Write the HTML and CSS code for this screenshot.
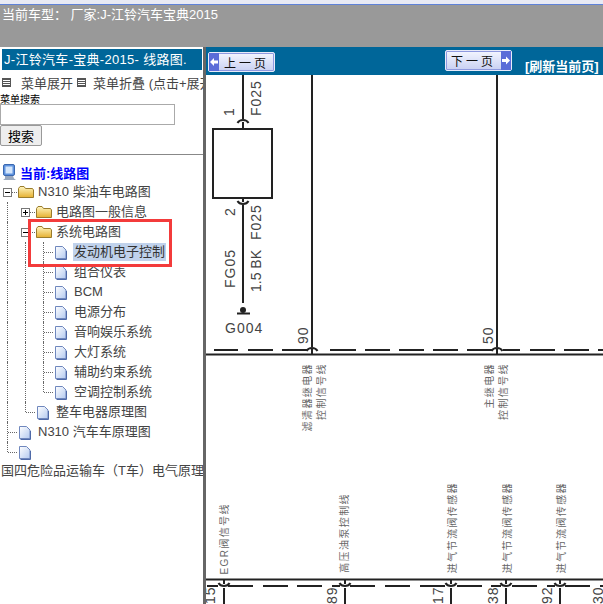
FILE: index.html
```html
<!DOCTYPE html>
<html lang="zh-CN">
<head>
  <meta charset="UTF-8">
  <title>线路图</title>
  <link rel="stylesheet" href="styles.css">
</head>
<body>
  <header class="topbar">当前车型： 厂家:J-江铃汽车宝典2015</header>

  <div class="frames">
    <aside class="sidebar">
      <div class="side-title">J-江铃汽车-宝典-2015- 线路图.</div>
      <div class="menu-links">
        <span class="menu-icon"></span><span class="menu-link">菜单展开</span>
        <span class="menu-icon"></span><span class="menu-link second">菜单折叠 (点击+展开)</span>
      </div>
      <div class="search-label">菜单搜索</div>
      <input class="search-input" type="text">
      <button class="search-btn">搜索</button>
      <hr class="divider">

      <div class="tree">
        <div class="row root">
          <svg class="icon" viewBox="0 0 18 20"><rect x="4.500" y="2.500" width="11" height="11" rx="1.500" fill="#5f93de" stroke="#3a68b0"/><rect x="6.500" y="4.500" width="7" height="7" fill="#d4e6fb"/><path d="M6 14h8l1 2.500 2 1.500H4l2-1.500z" fill="#9aa9bf"/></svg>
          <a class="current">当前:线路图</a>
        </div>
        <div class="row">
          <i class="cell minus"></i>
          <svg class="icon" viewBox="0 0 18 20"><use href="#folder"/></svg>
          <span class="label">N310 柴油车电路图</span>
        </div>
        <div class="row">
          <i class="cell line"></i><i class="cell plus"></i>
          <svg class="icon" viewBox="0 0 18 20"><use href="#folder"/></svg>
          <span class="label">电路图一般信息</span>
        </div>
        <div class="row">
          <i class="cell line"></i><i class="cell minus"></i>
          <svg class="icon" viewBox="0 0 18 20"><use href="#folder"/></svg>
          <span class="label">系统电路图</span>
        </div>
        <div class="row">
          <i class="cell line"></i><i class="cell line"></i><i class="cell join"></i>
          <svg class="icon" viewBox="0 0 18 20"><use href="#page"/></svg>
          <span class="label selected">发动机电子控制</span>
        </div>
        <div class="row">
          <i class="cell line"></i><i class="cell line"></i><i class="cell join"></i>
          <svg class="icon" viewBox="0 0 18 20"><use href="#page"/></svg>
          <span class="label">组合仪表</span>
        </div>
        <div class="row">
          <i class="cell line"></i><i class="cell line"></i><i class="cell join"></i>
          <svg class="icon" viewBox="0 0 18 20"><use href="#page"/></svg>
          <span class="label">BCM</span>
        </div>
        <div class="row">
          <i class="cell line"></i><i class="cell line"></i><i class="cell join"></i>
          <svg class="icon" viewBox="0 0 18 20"><use href="#page"/></svg>
          <span class="label">电源分布</span>
        </div>
        <div class="row">
          <i class="cell line"></i><i class="cell line"></i><i class="cell join"></i>
          <svg class="icon" viewBox="0 0 18 20"><use href="#page"/></svg>
          <span class="label">音响娱乐系统</span>
        </div>
        <div class="row">
          <i class="cell line"></i><i class="cell line"></i><i class="cell join"></i>
          <svg class="icon" viewBox="0 0 18 20"><use href="#page"/></svg>
          <span class="label">大灯系统</span>
        </div>
        <div class="row">
          <i class="cell line"></i><i class="cell line"></i><i class="cell join"></i>
          <svg class="icon" viewBox="0 0 18 20"><use href="#page"/></svg>
          <span class="label">辅助约束系统</span>
        </div>
        <div class="row">
          <i class="cell line"></i><i class="cell line"></i><i class="cell corner"></i>
          <svg class="icon" viewBox="0 0 18 20"><use href="#page"/></svg>
          <span class="label">空调控制系统</span>
        </div>
        <div class="row">
          <i class="cell line"></i><i class="cell corner"></i>
          <svg class="icon" viewBox="0 0 18 20"><use href="#page"/></svg>
          <span class="label">整车电器原理图</span>
        </div>
        <div class="row">
          <i class="cell join"></i>
          <svg class="icon" viewBox="0 0 18 20"><use href="#page"/></svg>
          <span class="label">N310 汽车车原理图</span>
        </div>
        <div class="row">
          <i class="cell corner"></i>
          <svg class="icon" viewBox="0 0 18 20"><use href="#page"/></svg>
        </div>
        <div class="row wrapped"><span class="label">国四危险品运输车（T车）电气原理图</span></div>
      </div>

      <div class="highlight"></div>
    </aside>

    <main class="viewer">
      <div class="pager">
        <a class="page-btn prev">
          <svg class="arrow" viewBox="0 0 10 10"><path d="M1 5l4-4v2.500h4v3H5V9z" fill="#fff"/></svg>
          <span>上一页</span>
        </a>
        <a class="page-btn next">
          <span>下一页</span>
          <svg class="arrow" viewBox="0 0 10 10"><path d="M9 5L5 1v2.500H1v3h4V9z" fill="#fff"/></svg>
        </a>
        <a class="refresh">[刷新当前页]</a>
      </div>

      
      <svg class="diagram" viewBox="206 75 397 529">
        <g class="wire">
          <path d="M243 75V119M243 122V129"/>
          <path d="M237.500 123a6 5 0 0 1 11 0"/>
          <rect x="213" y="129" width="59" height="69"/>
          <path d="M243 198V202M237.500 201a6 5 0 0 0 11 0M243 205V303"/>
          <path d="M237 313.500H250"/>
          <path d="M312 75V347M497 75V347"/>
          <path d="M306.500 351a6 5 0 0 1 11 0M491.500 351a6 5 0 0 1 11 0M312 349V354M497 349V354"/>
          <path d="M206 354.500H603M206 579.500H603"/>
          <path d="M214 350H238M248 350H273M282 350H307M330 350H356M365 350H390M399 350H424M433 350H458M467 350H492M503 350H520M530 350H555M564 350H589M598 350H603"/>
          <path d="M207 586H218M228 586H253M263 586H288M297 586H322M332 586H340M350 586H375M385 586H410M420 586H445M457 586H482M491 586H501M512 586H537M547 586H555M565 586H590M600 586H603"/>
          <path d="M218.500 583a6 5 0 0 0 11 0M339.500 583a6 5 0 0 0 11 0M445.500 583a6 5 0 0 0 11 0M500.500 583a6 5 0 0 0 11 0M554.500 583a6 5 0 0 0 11 0"/>
          <path d="M224 580V584M345 580V584M451 580V584M506 580V584M560 580V584"/>
          <path d="M224 588V604M345 588V604M451 588V604M506 588V604M560 588V604"/>
        </g>
        <circle cx="243" cy="310" r="3" fill="#222"/>

        <text class="part" transform="translate(234 116) rotate(-90)">1</text>
        <text class="part" transform="translate(261 116) rotate(-90)">F025</text>
        <text class="part" transform="translate(235 216) rotate(-90)">2</text>
        <text class="part" transform="translate(261 240) rotate(-90)">F025</text>
        <text class="part tight" transform="translate(261 292) rotate(-90)">1.5 BK</text>
        <text class="part" transform="translate(235 288) rotate(-90)">FG05</text>
        <text class="part" x="225" y="333">G004</text>
        <text class="part" transform="translate(308 344) rotate(-90)">90</text>
        <text class="part" transform="translate(493 344) rotate(-90)">50</text>

        <text class="note" transform="translate(311 363) rotate(-90)">滤清器继电器</text>
        <text class="note" transform="translate(325 363) rotate(-90)">控制信号线</text>
        <text class="note" transform="translate(493 363) rotate(-90)">主继电器</text>
        <text class="note" transform="translate(507 363) rotate(-90)">控制信号线</text>
        <text class="note" transform="translate(228 503) rotate(-90)">EGR阀信号线</text>
        <text class="note" transform="translate(348 493) rotate(-90)">高压油泵控制线</text>
        <text class="note" transform="translate(456 482) rotate(-90)">进气节流阀传感器</text>
        <text class="note" transform="translate(511 482) rotate(-90)">进气节流阀传感器</text>
        <text class="note" transform="translate(565 482) rotate(-90)">进气节流阀传感器</text>

        <text class="part" transform="translate(215 604) rotate(-90)">15</text>
        <text class="part" transform="translate(337 604) rotate(-90)">89</text>
        <text class="part" transform="translate(443 604) rotate(-90)">17</text>
        <text class="part" transform="translate(498 604) rotate(-90)">38</text>
        <text class="part" transform="translate(552 604) rotate(-90)">92</text>
        <text class="part" transform="translate(603 604) rotate(-90)">30</text>
      </svg>
    </main>
  </div>

  <svg class="sprites">
    <defs>
      <linearGradient id="folderFill" x1="0" y1="0" x2="0" y2="1">
        <stop offset="0" stop-color="#fff6c0"/>
        <stop offset="1" stop-color="#e6b030"/>
      </linearGradient>
      <linearGradient id="pageFill" x1="0" y1="0" x2="1" y2="1">
        <stop offset="0" stop-color="#ffffff"/>
        <stop offset="1" stop-color="#b4caf0"/>
      </linearGradient>
      <g id="folder">
        <path d="M1.500 15.500V6.500l1.500-2h4l1.500 2h7l1 1.500v7.500z" fill="url(#folderFill)" stroke="#9a7c2c"/>
      </g>
      <g id="page">
        <path d="M2.500 4.500h7l3.500 3.500v8.500H2.500z" fill="url(#pageFill)" stroke="#6f87bd"/>
        <path d="M13.500 9v8.500H3.500" fill="none" stroke="#4f6aa8"/>
      </g>
    </defs>
  </svg>
</body>
</html>
```

FILE: styles.css
```css
* {
  box-sizing: border-box;
}

html, body {
  height: 100%;
}

body {
  margin: 0;
  overflow: hidden;
  font-family: "Liberation Sans", "Noto Sans CJK SC", sans-serif;
  font-size: 13px;
  background: #fff;
  display: flex;
  flex-direction: column;
}

.topbar {
  height: 47px;
  flex: none;
  padding: 3px 0 0 2px;
  background: #999;
  border-top: 4px solid #e8eaf4;
  box-shadow: inset 0 1px 0 #5f82d8;
  color: #fff;
  font-size: 13px;
  line-height: 16px;
  white-space: pre;
}

.frames {
  flex: 1;
  display: flex;
  min-height: 0;
}

.sidebar {
  position: relative;
  width: 206px;
  flex: none;
  padding-top: 2px;
  overflow: hidden;
  border-right: 3px solid #666;
  color: #444;
}

.side-title {
  height: 21px;
  margin: 0 1px 0 2px;
  padding-left: 2px;
  background: #006699;
  color: #fff;
  letter-spacing: .3px;
  line-height: 21px;
  white-space: nowrap;
}

.menu-links {
  height: 22px;
  display: flex;
  align-items: center;
  padding-left: 2px;
  margin-top: 1px;
  white-space: nowrap;
}

.menu-icon {
  width: 9px;
  height: 9px;
  flex: none;
  border: 1px solid #555;
  background: repeating-linear-gradient(#555 0 1px, #fff 1px 2px);
}

.menu-link {
  margin: 0 4px 0 10px;
}

.menu-link.second {
  margin-left: 7px;
}

.search-label {
  height: 12px;
  margin-top: -1px;
  color: #000;
  font-size: 10px;
  line-height: 15px;
}

.search-input {
  display: block;
  width: 175px;
  height: 21px;
  margin: 0;
  padding: 0;
  border: 1px solid #aaa;
  background: #fff;
}

.search-btn {
  display: block;
  width: 42px;
  height: 21px;
  padding: 0;
  border: 1px solid #999;
  border-radius: 2px;
  background: #eee;
  color: #000;
  font-family: inherit;
  font-size: 13px;
}

.divider {
  height: 1px;
  margin: 8px 0 7px;
  border: 0;
  background: #888;
}

.tree {
  margin-left: -1px;
}

.row {
  display: flex;
  height: 20px;
  align-items: center;
  white-space: nowrap;
}

.row.root {
  padding-left: 0;
}

.row.wrapped {
  height: 18px;
  padding-left: 1px;
}

.cell {
  position: relative;
  width: 18px;
  height: 20px;
  flex: none;
}

.cell.line::before,
.cell.join::before,
.cell.corner::before {
  content: "";
  position: absolute;
  left: 8px;
  top: 0;
  height: 20px;
  border-left: 1px dotted #666;
}

.cell.corner::before {
  height: 10px;
}

.cell.join::after,
.cell.corner::after {
  content: "";
  position: absolute;
  left: 9px;
  top: 10px;
  width: 9px;
  border-top: 1px dotted #666;
}

.cell.plus::after,
.cell.minus::after {
  content: "";
  position: absolute;
  left: 13px;
  top: 10px;
  width: 5px;
  border-top: 1px dotted #666;
}

.cell.plus,
.cell.minus {
  background:
    linear-gradient(#000, #000) 6px 10px / 5px 1px no-repeat,
    linear-gradient(#fff, #fff) 5px 7px / 7px 7px no-repeat,
    linear-gradient(#777, #777) 4px 6px / 9px 9px no-repeat;
}

.cell.plus::before {
  content: "";
  position: absolute;
  left: 8px;
  top: 8px;
  height: 5px;
  border-left: 1px solid #000;
}

.icon {
  width: 18px;
  height: 20px;
  flex: none;
}

.label {
  margin-left: 2px;
  padding: 0 1px;
  line-height: 18px;
}

.wrapped .label {
  margin-left: 0;
}

.selected {
  background: #c0d2ec;
  color: #333;
}

.current {
  margin-left: 3px;
  color: #00f;
  font-weight: bold;
}

.highlight {
  position: absolute;
  left: 28px;
  top: 172px;
  width: 144px;
  height: 48px;
  border: 3px solid #f33b3b;
}

.viewer {
  flex: 1;
  min-width: 0;
  display: flex;
  flex-direction: column;
}

.pager {
  height: 28px;
  flex: none;
  display: flex;
  padding-left: 2px;
  background: #006699;
  white-space: nowrap;
}

.page-btn {
  width: 67px;
  height: 20px;
  display: flex;
  align-items: center;
  border: 1px solid #e8ebfa;
  border-radius: 2px;
  box-shadow: inset 0 0 0 1px #8f9ae0;
  background: linear-gradient(#f4f6ff, #c8d0f2);
  color: #111;
  font-size: 12px;
  letter-spacing: 3px;
}

.page-btn span {
  flex: 1;
  text-align: center;
}

.prev {
  margin-top: 5px;
}

.next {
  height: 21px;
  margin: 3px 0 0 170px;
}

.arrow {
  width: 10px;
  height: 100%;
  flex: none;
  background: #5a6cd8;
}

.refresh {
  margin: 12px 0 0 13px;
  color: #fff;
  font-size: 13px;
  font-weight: bold;
  line-height: 16px;
}

.diagram {
  flex: 1;
  min-height: 0;
  width: 100%;
  display: block;
}

.wire {
  fill: none;
  stroke: #222;
  stroke-width: 2;
}

.part {
  fill: #444;
  font-size: 14px;
  letter-spacing: 1px;
}

.part.tight {
  letter-spacing: 0;
}

.note {
  fill: #666;
  font-size: 10px;
  letter-spacing: 1.4px;
  text-anchor: end;
}

.sprites {
  position: absolute;
  width: 0;
  height: 0;
}
```
